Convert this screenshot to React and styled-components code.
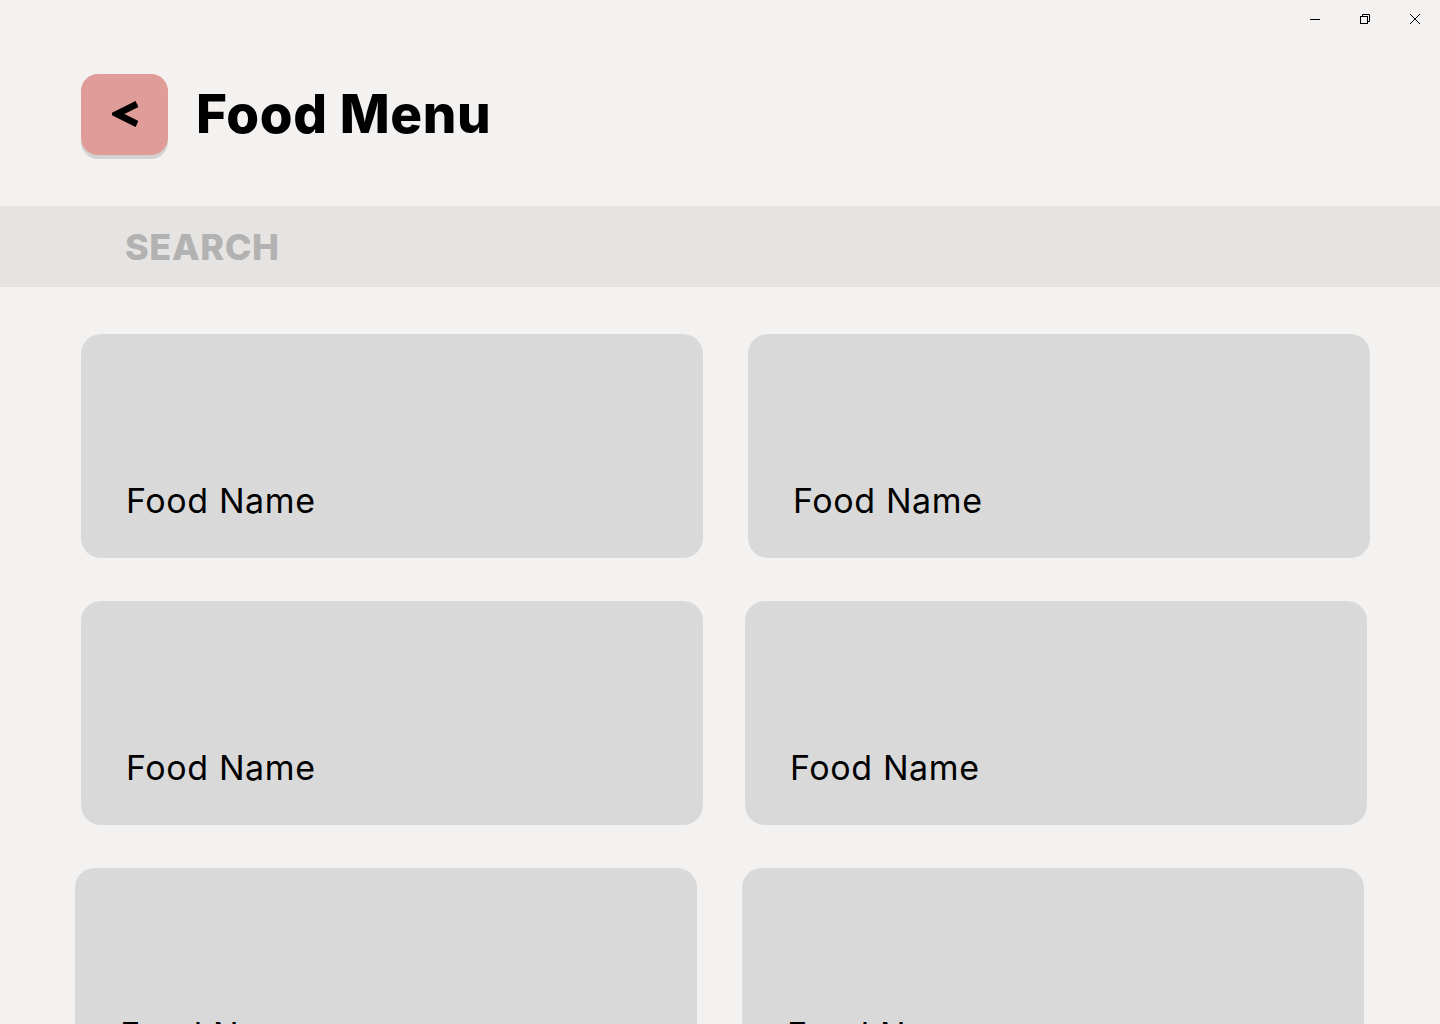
import styled, { createGlobalStyle } from "styled-components";

const GlobalStyle = createGlobalStyle`
  html, body {
    margin: 0;
    padding: 0;
    background: #f3f2f0;
    overflow: hidden;
  }
  * { box-sizing: border-box; }
`;

const Window = styled.div`
  width: 1440px;
  height: 1024px;
  overflow: hidden;
  background: #f3f2f0;
  font-family: Inter, "Noto Sans", sans-serif;
  color: #000;
`;

const TitleBar = styled.div`
  height: 38px;
  display: flex;
  justify-content: flex-end;
  align-items: center;
`;

const WinButton = styled.div`
  width: 50px;
  height: 38px;
  display: flex;
  align-items: center;
  justify-content: center;
`;

const Header = styled.header`
  display: flex;
  align-items: center;
  gap: 28px;
  padding: 36px 0 0 81px;
  height: 168px;
`;

const BackButton = styled.button`
  width: 87px;
  height: 81px;
  border: none;
  border-radius: 17px;
  background: #e09c98;
  box-shadow: 0 4px 0 #d5d3d1;
  display: flex;
  align-items: center;
  justify-content: center;
  margin-top: -52px;
  padding: 0;
`;

const Title = styled.h1`
  margin: -53px 0 0;
  font-size: 53px;
  font-weight: 800;
  letter-spacing: 0.6px;
`;

const SearchBar = styled.div`
  height: 81px;
  background: #e5e4e2;
  display: flex;
  align-items: center;
  padding-left: 125px;
`;

const SearchInput = styled.input`
  border: none;
  background: transparent;
  outline: none;
  font-family: Inter, "Noto Sans", sans-serif;
  font-size: 36px;
  font-weight: 800;
  letter-spacing: 0.6px;
  color: #b3b2b2;
  width: 600px;
  padding: 0;
  &::placeholder {
    color: #b3b2b2;
    opacity: 1;
  }
`;

const Grid = styled.div`
  display: flex;
  flex-direction: column;
  gap: 43px;
  padding: 47px 0 0 81px;
`;

const Row = styled.div`
  display: flex;
  gap: ${({ $gap }) => $gap}px;
  margin-left: ${({ $shift }) => $shift || 0}px;
`;

const Card = styled.div`
  width: 622px;
  height: 224px;
  flex: none;
  border-radius: 20px;
  background: #d9d9d9;
  display: flex;
  align-items: flex-end;
  padding: 0 0 37px 45px;
`;

const CardName = styled.span`
  font-size: 34px;
  line-height: 40px;
  font-weight: 400;
  letter-spacing: 0.6px;
`;

const rows = [
  { gap: 45, shift: 0 },
  { gap: 42, shift: 0 },
  { gap: 45, shift: -6 },
];

const App = () => (
  <Window>
    <GlobalStyle />
    <TitleBar>
      <WinButton>
        <svg width="10" height="10" viewBox="0 0 10 10">
          <path d="M0 5.5h10" stroke="#000" strokeWidth="1" />
        </svg>
      </WinButton>
      <WinButton>
        <svg width="10" height="10" viewBox="0 0 10 10" fill="none" stroke="#000" strokeWidth="1">
          <rect x="0.5" y="2.5" width="7" height="7" />
          <path d="M2.5 2.5V0.5h7v7h-2" />
        </svg>
      </WinButton>
      <WinButton>
        <svg width="10" height="10" viewBox="0 0 10 10" stroke="#000" strokeWidth="1">
          <path d="M0 0l10 10M10 0L0 10" />
        </svg>
      </WinButton>
    </TitleBar>

    <Header>
      <BackButton aria-label="Back">
        <svg width="26" height="26" viewBox="0 0 26 26">
          <path d="M25 3L5 13 25 23" fill="none" stroke="#000" strokeWidth="6.5" strokeLinejoin="miter" />
        </svg>
      </BackButton>
      <Title>Food Menu</Title>
    </Header>

    <SearchBar>
      <SearchInput placeholder="SEARCH" />
    </SearchBar>

    <Grid>
      {rows.map((row, i) => (
        <Row key={i} $gap={row.gap} $shift={row.shift}>
          <Card>
            <CardName>Food Name</CardName>
          </Card>
          <Card>
            <CardName>Food Name</CardName>
          </Card>
        </Row>
      ))}
    </Grid>
  </Window>
);

export default App;
